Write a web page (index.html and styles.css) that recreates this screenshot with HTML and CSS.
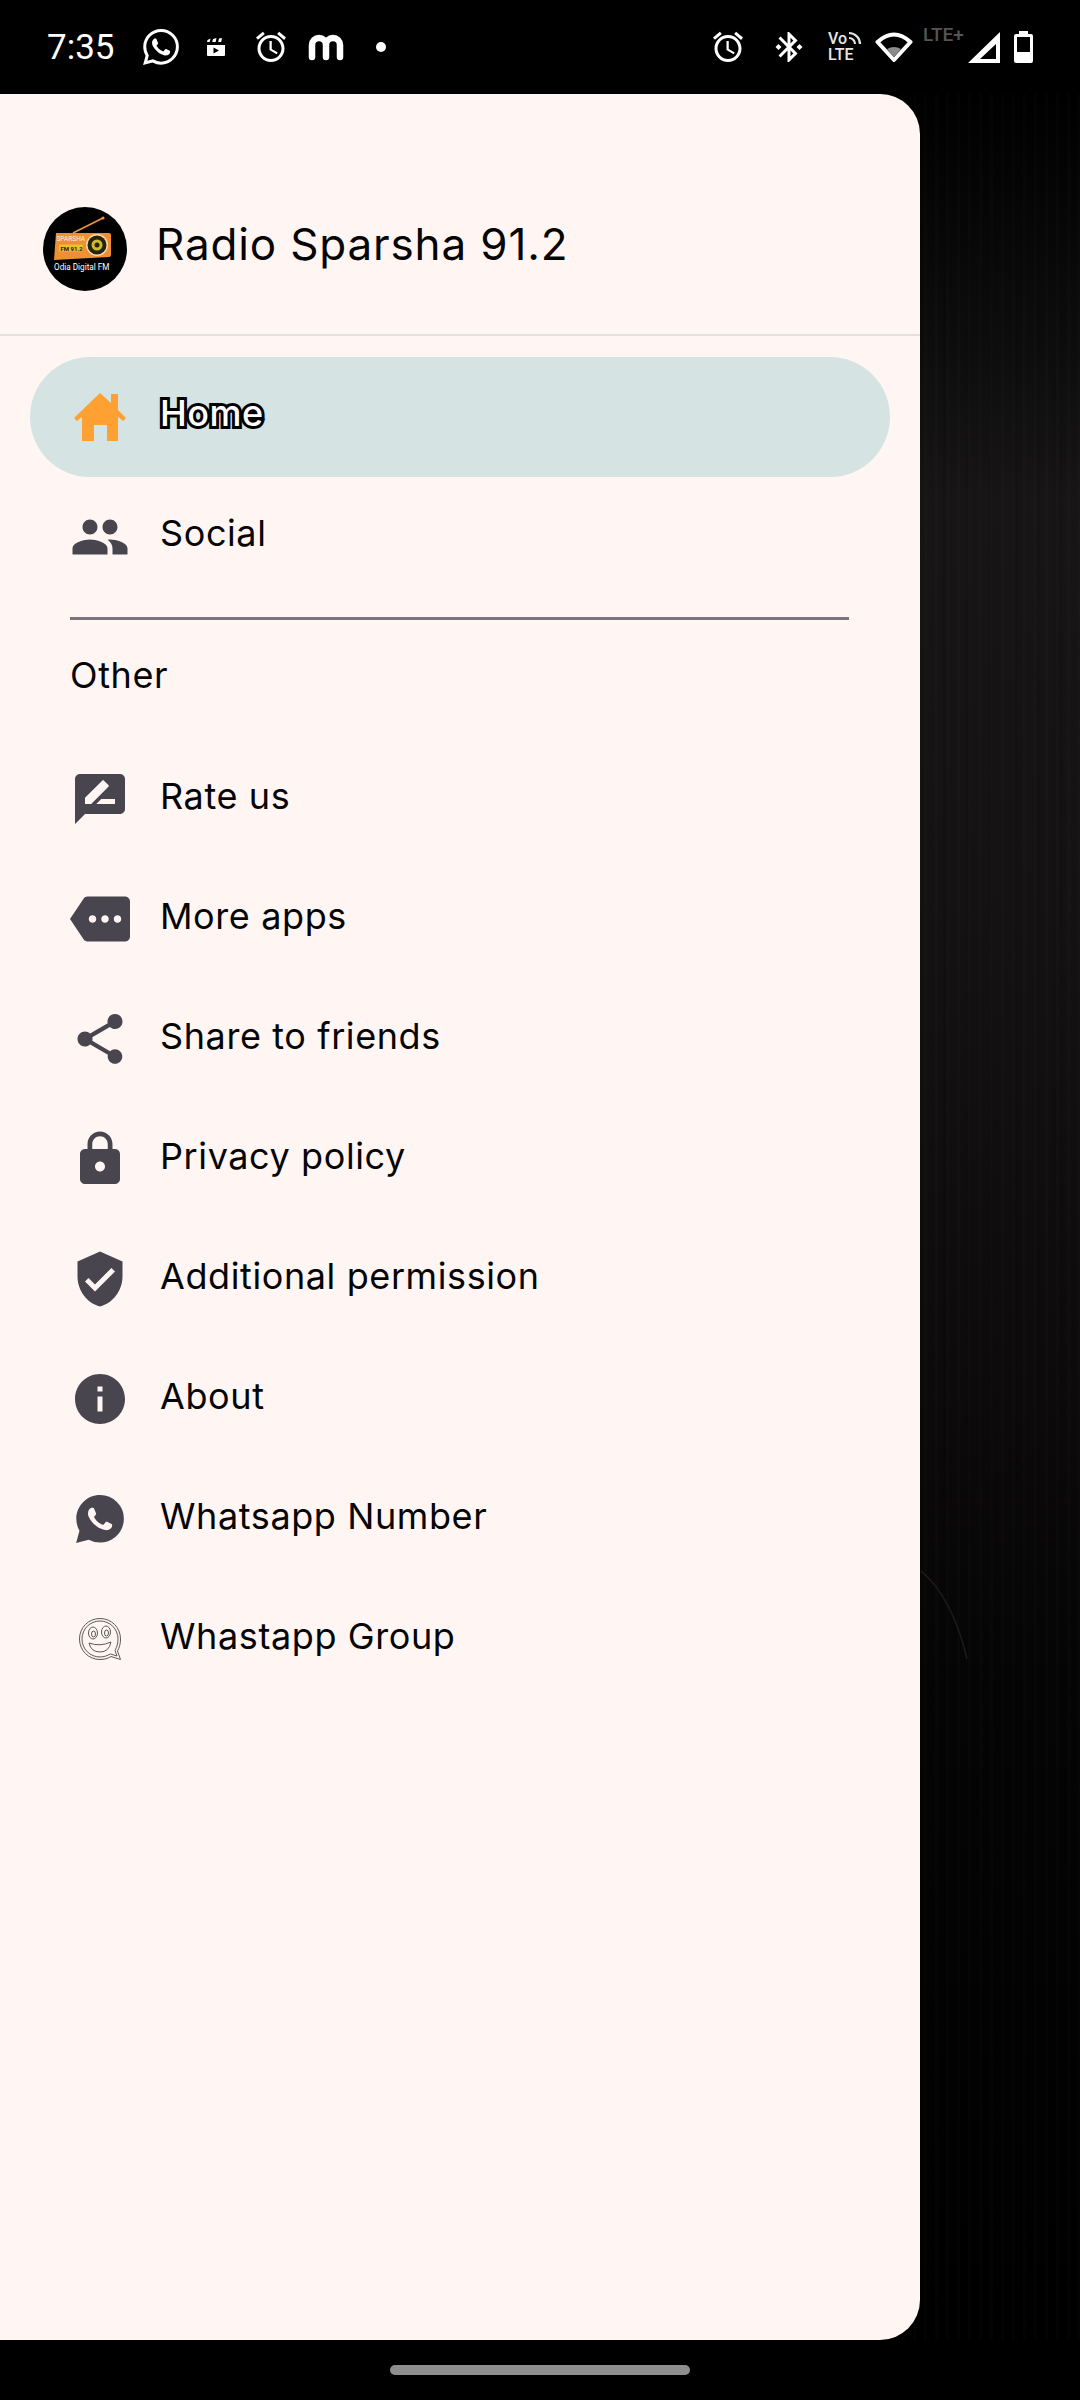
FILE: index.html
```html
<!DOCTYPE html>
<html lang="en">
<head>
  <meta charset="UTF-8" />
  <meta name="viewport" content="width=device-width, initial-scale=1.0"/>
  <title>Radio Sparsha 91.2</title>
  <link rel="stylesheet" href="styles.css">
</head>
<body>

  <div class="status-bar">
    <span class="clock">7:35</span>
    <div class="status-left">
      <svg class="s-icon" viewBox="0 0 24 24"><path fill-rule="evenodd" d="M17.472 14.382c-.297-.149-1.758-.867-2.03-.967-.273-.099-.471-.148-.67.15-.197.297-.767.966-.94 1.164-.173.199-.347.223-.644.075-.297-.15-1.255-.463-2.39-1.475-.883-.788-1.48-1.761-1.653-2.059-.173-.297-.018-.458.13-.606.134-.133.298-.347.446-.52.149-.174.198-.298.298-.497.099-.198.05-.371-.025-.52-.075-.149-.669-1.612-.916-2.207-.242-.579-.487-.5-.669-.51-.173-.008-.371-.01-.57-.01-.198 0-.52.074-.792.372-.272.297-1.04 1.016-1.04 2.479 0 1.462 1.065 2.875 1.213 3.074.149.198 2.096 3.2 5.077 4.487.709.306 1.262.489 1.694.625.712.227 1.36.195 1.871.118.571-.085 1.758-.719 2.006-1.413.248-.694.248-1.289.173-1.413-.074-.124-.272-.198-.57-.347m-5.421 7.403h-.004a9.87 9.87 0 01-5.031-1.378l-.361-.214-3.741.982.998-3.648-.235-.374a9.86 9.86 0 01-1.51-5.26c.001-5.45 4.436-9.884 9.888-9.884 2.64 0 5.122 1.03 6.988 2.898a9.825 9.825 0 012.893 6.994c-.003 5.45-4.437 9.884-9.885 9.884m8.413-18.297A11.815 11.815 0 0012.05 0C5.495 0 .16 5.335.157 11.892c0 2.096.547 4.142 1.588 5.945L.057 24l6.305-1.654a11.882 11.882 0 005.683 1.448h.005c6.554 0 11.89-5.335 11.893-11.893a11.821 11.821 0 00-3.48-8.413z"/></svg>
      <svg class="s-icon" viewBox="0 0 36 36"><path fill-rule="evenodd" d="M9 16h18v10a1 1 0 0 1-1 1H10a1 1 0 0 1-1-1zM15.500 18.500v6l5.500-3zM9.500 11l3-1.500-.8 3.500H9zM15 10l3.500-1-.9 4H14.200zM21 9.500l3-.5-.8 4h-3z"/></svg>
      <svg class="s-icon" viewBox="0 0 24 24"><path d="M22 5.720l-4.600-3.860-1.290 1.530 4.600 3.860L22 5.720zM7.880 3.390L6.600 1.860 2 5.710l1.290 1.530 4.590-3.850zM12.500 8H11v6l4.750 2.850.75-1.230-4-2.370V8zM12 4c-4.970 0-9 4.030-9 9s4.030 9 9 9 9-4.030 9-9-4.030-9-9-9zm0 16c-3.870 0-7-3.130-7-7s3.130-7 7-7 7 3.130 7 7-3.130 7-7 7z"/></svg>
      <svg class="s-icon" viewBox="0 0 36 36"><path class="m-stroke" d="M4 28V16a7 7 0 0 1 14 0v12M18 16a7 7 0 0 1 14 0v12"/></svg>
      <svg class="s-icon" viewBox="0 0 36 36"><circle cx="18" cy="18" r="5"/></svg>
    </div>
    <div class="status-right">
      <svg class="r-alarm" viewBox="0 0 24 24"><path d="M22 5.720l-4.600-3.860-1.290 1.530 4.600 3.860L22 5.720zM7.880 3.390L6.600 1.860 2 5.710l1.290 1.530 4.590-3.850zM12.500 8H11v6l4.750 2.850.75-1.230-4-2.370V8zM12 4c-4.970 0-9 4.030-9 9s4.030 9 9 9 9-4.030 9-9-4.030-9-9-9zm0 16c-3.870 0-7-3.130-7-7s3.130-7 7-7 7 3.130 7 7-3.130 7-7 7z"/></svg>
      <svg class="r-bt" viewBox="3 0 18 24"><path d="M7 12l-2-2-2 2 2 2 2-2zm10.710-4.290L12 2h-1v7.590L6.410 5 5 6.410 10.590 12 5 17.590 6.410 19 11 14.410V22h1l5.710-5.710-4.300-4.290 4.300-4.290zM13 5.830l1.880 1.880L13 9.590V5.830zm1.880 10.460L13 18.170v-3.760l1.880 1.880zM19 10l-2 2 2 2 2-2-2-2z"/></svg>
      <div class="volte">
        <span class="volte-vo">Vo</span>
        <span class="volte-lte">LTE</span>
        <svg class="volte-wave" viewBox="0 0 14 14"><path d="M1 2a11 11 0 0 1 11 11M1 7a6 6 0 0 1 6 6"/></svg>
      </div>
      <svg class="r-wifi" viewBox="0 0 38 32">
        <path class="wifi-fan" d="M2.500 11Q19 -4 35.500 11L19 29z"/>
        <path class="wifi-core" d="M12 18Q19 14 26 18L19 26z"/>
      </svg>
      <span class="r-lte">LTE+</span>
      <svg class="r-signal" viewBox="0 0 32 31"><path fill-rule="evenodd" d="M0 31L32 0V31zM12 27H28V12z"/></svg>
      <svg class="r-battery" viewBox="0 0 19 32"><path fill-rule="evenodd" d="M5 0H14V3H17a2 2 0 0 1 2 2V30a2 2 0 0 1-2 2H2a2 2 0 0 1-2-2V5a2 2 0 0 1 2-2H5zM3 6V21H16V6z"/></svg>
    </div>
  </div>

  <div class="main">
    <svg class="scratch" viewBox="0 0 50 90"><path d="M1 1C22 18 38 50 47 89"/></svg>

    <aside class="drawer">
      <div class="drawer-header">
        <svg class="logo" viewBox="0 0 84 84">
          <circle cx="42" cy="42" r="42" fill="#000"/>
          <path d="M30 26L60 11" stroke="#f0923a" stroke-width="1.800"/>
          <circle cx="60" cy="11" r="1.500" fill="#f0923a"/>
          <path d="M13 26H66Q68 26 68 28V48Q68 50 66 50L11 53z" fill="#ee8f33"/>
          <circle cx="54" cy="38" r="11" fill="#f9d9b0"/>
          <circle cx="54" cy="38" r="9.500" fill="#26230f"/>
          <circle cx="54" cy="38" r="5.500" fill="#cdbb2a"/>
          <circle cx="54" cy="38" r="2.500" fill="#26230f"/>
          <text class="logo-small" x="13.500" y="33.500">SPARSHA</text>
          <rect x="16" y="37.500" width="24" height="7" fill="#e9bf33"/>
          <text class="logo-fm" x="17.500" y="43.500">FM 91.2</text>
          <text class="logo-tag" x="11" y="63">Odia Digital FM</text>
        </svg>
        <span class="app-name">Radio Sparsha 91.2</span>
      </div>

      <nav class="menu">
        <a class="menu-item active">
          <svg class="icon" viewBox="0 0 60 60"><path class="house" d="M30 6L41 16V7H48V23L56 31 53 34 48 30V54H37V38H24V54H12V30L7 34 4 31z"/></svg>
          <span class="label">Home</span>
        </a>
        <a class="menu-item">
          <svg class="icon" viewBox="0 0 24 24"><path d="M16 11c1.660 0 2.990-1.340 2.990-3S17.660 5 16 5c-1.660 0-3 1.340-3 3s1.340 3 3 3zm-8 0c1.660 0 2.990-1.340 2.990-3S9.660 5 8 5C6.340 5 5 6.340 5 8s1.340 3 3 3zm0 2c-2.330 0-7 1.170-7 3.500V19h14v-2.500c0-2.330-4.670-3.500-7-3.500zm8 0c-.290 0-.620.020-.970.050 1.160.840 1.970 1.970 1.970 3.450V19h6v-2.500c0-2.330-4.670-3.500-7-3.500z"/></svg>
          <span class="label">Social</span>
        </a>
      </nav>

      <div class="menu-divider"></div>
      <h2 class="section-title">Other</h2>

      <nav class="menu">
        <a class="menu-item">
          <svg class="icon" viewBox="0 0 24 24"><path d="M20 2H4c-1.100 0-1.990.9-1.990 2L2 22l4-4h14c1.100 0 2-.9 2-2V4c0-1.100-.9-2-2-2zM6 14v-2.470l6.880-6.880c.2-.2.510-.2.710 0l1.770 1.770c.2.2.2.510 0 .710L8.470 14H6zm12 0h-7.500l2-2H18v2z"/></svg>
          <span class="label">Rate us</span>
        </a>
        <a class="menu-item">
          <svg class="icon" viewBox="0 0 24 24"><path d="M22 3H7c-.690 0-1.230.350-1.590.880L0 12l5.410 8.110c.360.530.9.890 1.590.890h15c1.100 0 2-.9 2-2V5c0-1.100-.9-2-2-2zM9 13.500c-.830 0-1.500-.670-1.500-1.500s.670-1.500 1.500-1.500 1.500.670 1.500 1.500-.670 1.500-1.500 1.500zm5 0c-.830 0-1.500-.670-1.500-1.500s.670-1.500 1.500-1.500 1.500.670 1.500 1.500-.670 1.500-1.500 1.500zm5 0c-.830 0-1.500-.670-1.500-1.500s.670-1.500 1.500-1.500 1.500.670 1.500 1.500-.670 1.500-1.500 1.500z"/></svg>
          <span class="label">More apps</span>
        </a>
        <a class="menu-item">
          <svg class="icon" viewBox="0 0 24 24"><path d="M18 16.080c-.760 0-1.440.3-1.960.770L8.910 12.700c.050-.230.090-.460.090-.7s-.040-.470-.090-.7l7.050-4.110c.540.5 1.250.810 2.040.810 1.660 0 3-1.340 3-3s-1.340-3-3-3-3 1.340-3 3c0 .240.040.470.090.7L8.040 9.810C7.500 9.310 6.790 9 6 9c-1.660 0-3 1.340-3 3s1.340 3 3 3c.790 0 1.500-.310 2.040-.810l7.120 4.160c-.050.210-.080.430-.080.650 0 1.610 1.310 2.920 2.920 2.920 1.610 0 2.920-1.310 2.920-2.920s-1.310-2.920-2.920-2.920z"/></svg>
          <span class="label">Share to friends</span>
        </a>
        <a class="menu-item">
          <svg class="icon" viewBox="0 0 24 24"><path d="M18 8h-1V6c0-2.760-2.240-5-5-5S7 3.240 7 6v2H6c-1.100 0-2 .9-2 2v10c0 1.100.9 2 2 2h12c1.100 0 2-.9 2-2V10c0-1.100-.9-2-2-2zm-6 9c-1.100 0-2-.9-2-2s.9-2 2-2 2 .9 2 2-.9 2-2 2zm3.100-9H8.900V6c0-1.710 1.390-3.100 3.100-3.100 1.710 0 3.100 1.390 3.100 3.100v2z"/></svg>
          <span class="label">Privacy policy</span>
        </a>
        <a class="menu-item">
          <svg class="icon" viewBox="0 0 24 24"><path d="M12 1L3 5v6c0 5.550 3.840 10.740 9 12 5.160-1.260 9-6.450 9-12V5l-9-4zm-2 16l-4-4 1.410-1.410L10 14.170l6.590-6.590L18 9l-8 8z"/></svg>
          <span class="label">Additional permission</span>
        </a>
        <a class="menu-item">
          <svg class="icon" viewBox="0 0 24 24"><path d="M12 2C6.480 2 2 6.480 2 12s4.480 10 10 10 10-4.480 10-10S17.520 2 12 2zm1 15h-2v-6h2v6zm0-8h-2V7h2v2z"/></svg>
          <span class="label">About</span>
        </a>
        <a class="menu-item">
          <svg class="icon" viewBox="-3 -3 30 30"><path fill-rule="evenodd" d="M20.463 3.488A11.815 11.815 0 0012.050 0C5.495 0 .16 5.335.157 11.892c0 2.096.547 4.142 1.588 5.945L.057 24l6.305-1.654a11.882 11.882 0 005.683 1.448h.005c6.554 0 11.890-5.335 11.893-11.893a11.821 11.821 0 00-3.480-8.413zM17.472 14.382c-.297-.149-1.758-.867-2.030-.967-.273-.099-.471-.148-.670.150-.197.297-.767.966-.940 1.164-.173.199-.347.223-.644.075-.297-.150-1.255-.463-2.390-1.475-.883-.788-1.480-1.761-1.653-2.059-.173-.297-.018-.458.130-.606.134-.133.298-.347.446-.520.149-.174.198-.298.298-.497.099-.198.050-.371-.025-.520-.075-.149-.669-1.612-.916-2.207-.242-.579-.487-.5-.669-.510-.173-.008-.371-.010-.570-.010-.198 0-.520.074-.792.372-.272.297-1.040 1.016-1.040 2.479 0 1.462 1.065 2.875 1.213 3.074.149.198 2.096 3.200 5.077 4.487.709.306 1.262.489 1.694.625.712.227 1.360.195 1.871.118.571-.085 1.758-.719 2.006-1.413.248-.694.248-1.289.173-1.413-.074-.124-.272-.198-.570-.347z"/></svg>
          <span class="label">Whatsapp Number</span>
        </a>
        <a class="menu-item">
          <svg class="icon sticker" viewBox="0 0 60 60">
            <path d="M30 9.500C18.500 9.500 9.500 18.500 9.500 30S18.500 50.500 30 50.500C34 50.500 38 49.500 41 47.500L50.500 50.500 47.500 42C49.500 38.500 50.500 34.500 50.500 30 50.500 18.500 41.500 9.500 30 9.500z"/>
            <path d="M30 12C20 12 12 20 12 30S20 48 30 48C34 48 37.500 46.500 40.500 45L47 47 45 41.500C47 38 48 34 48 30 48 20 40 12 30 12z"/>
            <ellipse cx="23" cy="24" rx="4.500" ry="6"/>
            <ellipse cx="23.500" cy="25" rx="2" ry="3"/>
            <ellipse cx="36" cy="23" rx="4.500" ry="6"/>
            <ellipse cx="36.500" cy="24" rx="2" ry="3"/>
            <path d="M19 34Q30 38 41 33Q39 43 30 43Q21 43 19 34z"/>
          </svg>
          <span class="label">Whastapp Group</span>
        </a>
      </nav>
    </aside>
  </div>

  <div class="gesture-area">
    <div class="gesture-pill"></div>
  </div>

</body>
</html>
```

FILE: styles.css
```css
* { box-sizing: border-box; margin: 0; padding: 0; }
html, body { width: 1080px; height: 2400px; overflow: hidden; }
body { background: #000; font-family: Inter, "Open Sans", sans-serif; color: #050505; }

/* Status bar */
.status-bar {
  height: 94px;
  display: flex;
  align-items: center;
  padding: 0 47px;
  color: #fff;
}
.status-bar svg { fill: #fff; display: block; flex: none; }
.clock {
  font-family: Roboto, sans-serif;
  font-size: 35px;
  width: 68px;
  margin-right: 28px;
}
.status-left { display: flex; gap: 19px; }
.s-icon { width: 36px; height: 36px; }
.status-bar .m-stroke { fill: none; stroke: #fff; stroke-width: 6.500; stroke-linecap: round; }
.status-right { display: flex; align-items: center; margin-left: auto; }
.r-alarm { width: 36px; height: 36px; margin-right: 29px; }
.r-bt { width: 28px; height: 36px; margin-right: 25px; }
.volte {
  display: grid;
  grid-template-columns: auto auto;
  width: 34px;
  margin-right: 13px;
  font-family: Roboto, sans-serif;
  font-size: 16px;
  font-weight: 500;
  line-height: 16px;
  color: #e6e6e6;
}
.volte-vo { grid-column: 1; grid-row: 1; }
.volte-lte { grid-column: 1 / 3; grid-row: 2; }
.status-bar .volte-wave { grid-column: 2; grid-row: 1; width: 14px; height: 14px; fill: none; }
.volte-wave path { stroke: #e6e6e6; stroke-width: 2.200; }
.r-wifi { width: 38px; height: 32px; margin-right: 10px; }
.r-lte {
  width: 39px;
  margin-right: 6px;
  margin-top: -24px;
  font-family: Roboto, sans-serif;
  font-size: 19px;
  font-weight: 500;
  line-height: 20px;
  color: #555;
  white-space: nowrap;
}
.r-signal { width: 32px; height: 31px; margin-right: 14px; }
.r-battery { width: 19px; height: 32px; }
.status-bar .wifi-fan { fill: none; stroke: #fff; stroke-width: 4; stroke-linejoin: round; }
.status-bar .wifi-core { fill: #8c8c8c; }

/* Drawer + dimmed page behind it */
.main {
  position: relative;
  height: 2246px;
  background:
    repeating-linear-gradient(90deg, rgba(255,255,255,0.01) 0 3px, transparent 3px 11px),
    repeating-linear-gradient(90deg, rgba(0,0,0,0.08) 0 5px, transparent 5px 23px),
    repeating-linear-gradient(90deg, transparent 0 17px, rgba(0,0,0,0.06) 17px 21px, transparent 21px 37px),
    linear-gradient(180deg, #000 0, #080808 7%, #171515 18%, #141212 36%, #0c0a0a 58%, #060505 69%, #020202 85%, #000 100%);
}
.scratch { position: absolute; left: 920px; top: 1476px; width: 50px; height: 90px; }
.scratch path { fill: none; stroke: #1d1b1b; stroke-width: 1.500; }

.drawer {
  position: relative;
  width: 920px;
  height: 100%;
  background: #fff6f3;
  border-radius: 0 40px 40px 0;
}
.drawer-header {
  display: flex;
  align-items: center;
  gap: 29px;
  padding: 113px 0 43px 43px;
  border-bottom: 2px solid #e6dfdc;
}
.logo { width: 84px; height: 84px; flex: none; }
.logo-small { font-family: Roboto, sans-serif; font-size: 6.500px; fill: #fff4e0; }
.logo-fm { font-family: Roboto, sans-serif; font-size: 6px; font-weight: 700; fill: #2a2010; }
.logo-tag { font-family: Roboto, sans-serif; font-size: 8.200px; fill: #fff; }
.app-name {
  font-size: 44px;
  font-weight: 400;
  letter-spacing: 0.85px;
  line-height: 52px;
  margin-top: -10px;
}

.menu { display: flex; flex-direction: column; }
.drawer-header + .menu { margin-top: 21px; }
.menu-item {
  height: 120px;
  display: flex;
  align-items: center;
  gap: 30px;
  margin: 0 30px;
  padding-left: 40px;
  border-radius: 60px;
}
.menu-item.active { background: #d5e4e3; }
.icon { width: 60px; height: 60px; fill: #49454f; flex: none; }
.house { fill: #ffa033; }
.sticker { fill: none; stroke: #5a5a5a; stroke-width: 1; }
.label {
  font-size: 36px;
  letter-spacing: 0.6px;
  line-height: 44px;
  margin-bottom: 6px;
}
.drawer-header + .menu .label { margin-bottom: 8px; }
.menu-item.active .label {
  color: #fff;
  font-weight: 500;
  letter-spacing: 0.5px;
  -webkit-text-stroke: 6px #000;
  paint-order: stroke fill;
}

.menu-divider {
  height: 3px;
  margin: 20px 71px 0 70px;
  background: #79747e;
}
.section-title {
  font-size: 36px;
  font-weight: 400;
  line-height: 44px;
  letter-spacing: 0.6px;
  padding: 33px 0 42px 70px;
}

/* Gesture bar */
.gesture-area {
  height: 60px;
  display: flex;
  justify-content: center;
  padding-top: 25px;
}
.gesture-pill { width: 300px; height: 10px; border-radius: 5px; background: #8e8e8e; }
```
